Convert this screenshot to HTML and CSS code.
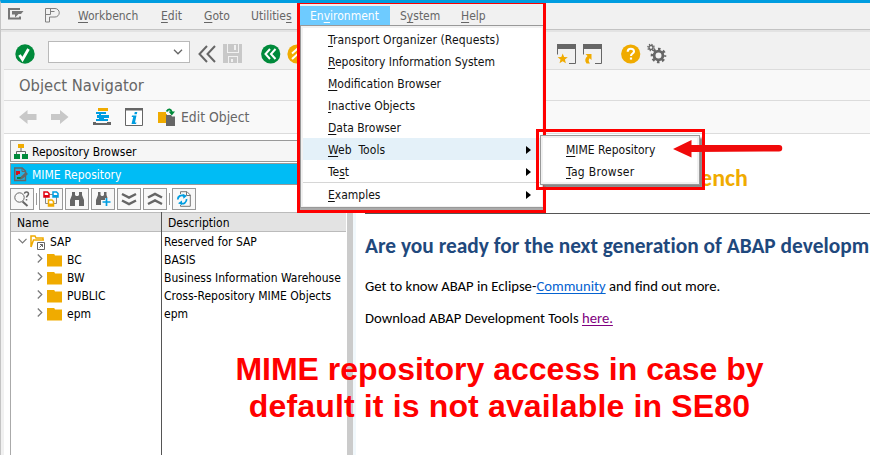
FILE: index.html
```
<!DOCTYPE html>
<html lang="en">
<head>
<meta charset="utf-8">
<title>Object Navigator</title>
<link rel="stylesheet" href="styles.css">
</head>
<body>
<div class="window">
  <nav class="menubar">
    <svg class="sys-icon" width="16" height="12" viewBox="0 0 16 12"><path d="M12 1H1V10.500H12V8.500" fill="none" stroke="#777" stroke-width="2"/><path d="M4 3h11.500l-2.500 3H10.500L7 9.500V6.500H4z" fill="#777"/></svg>
    <svg class="p-icon" width="16" height="15" viewBox="0 0 16 15"><path d="M.5 14V.5H10a4.200 4.200 0 0 1 0 8.500H4.500V14zM5.500 .5V6.500H.5M5.500 3.500H9.500" fill="none" stroke="#808080"/></svg>
    <div class="menus">
      <span><u>W</u>orkbench</span><span><u>E</u>dit</span><span><u>G</u>oto</span><span>Utilitie<u>s</u></span><span class="open">En<u>v</u>ironment</span><span>S<u>y</u>stem</span><span><u>H</u>elp</span>
    </div>
  </nav>
  <div class="toolbar">
    <svg class="t-check" width="20" height="20" viewBox="0 0 20 20"><circle cx="10" cy="10" r="9.700" fill="#008a3b"/><path d="M4.500 11l3 4.500L13.500 5" fill="none" stroke="#fff" stroke-width="2.800"/></svg>
    <div class="combo"><svg width="10" height="6" viewBox="0 0 10 6"><path d="M1 .8l4 4 4-4" fill="none" stroke="#666" stroke-width="1.300"/></svg></div>
    <svg class="t-back" width="18" height="18" viewBox="0 0 18 18"><path d="M9 1L1.500 9 9 17M17 1L9.500 9 17 17" fill="none" stroke="#666" stroke-width="2"/></svg>
    <svg class="t-save" width="20" height="19" viewBox="0 0 20 19"><path d="M0 0h19v19H0z" fill="#c8c8c8"/><path d="M4 0h1v8h10V0h1v9H4zM5 12h10v1H6v6H5zM14 13h1v6h-1z" fill="#f1f1f1"/><path d="M11 1h2v5h-2zM8 15h2v3H8z" fill="#f1f1f1"/></svg>
    <svg class="t-prev" width="20" height="20" viewBox="0 0 20 20"><circle cx="9.700" cy="10" r="9.600" fill="#008a3b"/><path d="M9 5L4.500 10 9 15M14.500 5L10 10l4.500 5" fill="none" stroke="#fff" stroke-width="2"/></svg>
    <svg class="t-up" width="20" height="20" viewBox="0 0 20 20"><circle cx="10" cy="10" r="9.600" fill="#f0ab00"/><path d="M5 9.500L10 5l5 4.500M5 15l5-4.500 5 4.500" fill="none" stroke="#fff" stroke-width="2"/></svg>
    <svg class="t-star" width="19" height="20" viewBox="0 0 19 20"><path d="M0 0h19v5H0z" fill="#666"/><path d="M.5 4v6.500M18.500 4v15.500H12" fill="none" stroke="#666"/><path d="M5.700 9.500l1.400 3.500 3.700.3-2.900 2.300 1 3.700-3.200-2-3.200 2 1-3.700L.6 13.300l3.700-.3z" fill="#f0ab00"/></svg>
    <svg class="t-link" width="19" height="20" viewBox="0 0 19 20"><path d="M0 0h19v5H0z" fill="#666"/><path d="M.5 4v6.500M18.500 4v15.500H12" fill="none" stroke="#666"/><path d="M2.500 10h6v6L6.700 14.300Q4.500 16.500 7 19.500H3.500Q.5 15.500 4.500 12z" fill="#f0ab00"/></svg>
    <svg class="t-help" width="20" height="20" viewBox="0 0 20 20"><circle cx="9.700" cy="10" r="9.600" fill="#f0ab00"/><path d="M6.700 7.800C6.700 3.800 13 4 13 7.400 13 9.500 10 9.500 10 12" fill="none" stroke="#fff" stroke-width="2.100"/><path d="M8.900 13.500h2.200v2.100H8.900z" fill="#fff"/></svg>
    <svg class="t-gear" width="20" height="21" viewBox="0 0 20 21"><g fill="none" stroke="#666"><circle cx="11.500" cy="12.500" r="4.400" stroke-width="2.800"/><circle cx="11.500" cy="12.500" r="6.500" stroke-width="2.600" stroke-dasharray="2.550" stroke-dashoffset="1.275"/><circle cx="4" cy="4.500" r="2" stroke-width="1.400"/><circle cx="4" cy="4.500" r="3.200" stroke-width="1.300" stroke-dasharray="1.257"/></g></svg>
  </div>
  <div class="inner">
    <h1 class="title">Object Navigator</h1>
    <div class="actions">
      <svg class="a-left" width="18" height="14" viewBox="0 0 18 14"><path d="M0 7L8.500 0v4h9v6h-9v4z" fill="#c8c8c8"/></svg>
      <svg class="a-right" width="18" height="14" viewBox="0 0 18 14"><path d="M17.500 7L9 0v4H0v6h9v4z" fill="#c8c8c8"/></svg>
      <svg class="a-stack" width="18" height="18" viewBox="0 0 18 18"><path d="M5 0h10v3H5z" fill="#f0ab00"/><path d="M3 4h10v2H8v1h8v3h-5v1h4v2H3v-2h3v-1H4V7h2V6H3z" fill="#009de0"/><path d="M0 14h3v1h11v-1h4v3H0z" fill="#666"/></svg>
      <svg class="a-info" width="18" height="18" viewBox="0 0 18 18"><path d="M.5 .5h17v17H.5z" fill="#fff" stroke="#666"/><path d="M0 0h18v2.500H0z" fill="#666"/><path d="M9.800 4h2.500l-.5 2.200H9.300zM7 7.500h4.500L10 14.500h1.500L11 16H6.500L8.200 9H6.700z" fill="#009de0"/></svg>
      <svg class="a-edit" width="18" height="18" viewBox="0 0 18 18"><path d="M0 4h8v2h1v9H0z" fill="#f0ab00"/><path d="M8.500 3.500Q12-1 14 4.500" fill="none" stroke="#008a3b" stroke-width="1.800"/><path d="M10.500 3.500H17L13.800 7.500z" fill="#008a3b"/><path d="M8 7h5l1 1.500h3V18H8z" fill="#666"/></svg>
      <span>Edit Object</span>
    </div>
    <div class="workspace">
      <aside class="browser">
        <div class="bar">
          <svg width="14" height="15" viewBox="0 0 14 15"><path d="M4 0h6v4H4z" fill="#f0ab00"/><path d="M7 4v3M2.500 10V7.500h9V10" fill="none" stroke="#666"/><path d="M0 10h6v5H0zM8 10h6v5H8z" fill="#008a3b"/></svg>
          <span>Repository Browser</span>
        </div>
        <div class="bar active">
          <svg width="14" height="15" viewBox="0 0 14 15"><path d="M.7 1h7.500L11.500 4v9.500H.7z" fill="#22b2e3" stroke="#666" stroke-width="1.400"/><path d="M8 1v3.500h3.500" fill="none" stroke="#666"/><path d="M2 4h4v3H4v1H2z" fill="#d8101c"/><path d="M3 10h4v2H3z" fill="#008a3b"/><path d="M6 12.500l1-3 5-4.500 2 2-5 4.500z" fill="#666"/></svg>
          <span>MIME Repository</span>
        </div>
        <div class="tools">
          <span class="btn"><svg width="16" height="16" viewBox="0 0 16 16"><circle cx="5.500" cy="6.500" r="4.700" fill="none" stroke="#666"/><path d="M8.500 10.500l5 4.500" stroke="#666" stroke-width="2"/><path d="M10.500 2.800C10.500 .2 14.500 .3 14.500 3c0 1.500-2 1.700-2 3.500M12.500 8v1.500" fill="none" stroke="#666" stroke-width="1.500"/></svg></span>
          <i class="sep"></i>
          <span class="btn"><svg width="16" height="16" viewBox="0 0 16 16"><path d="M2.500 6v6.500H5M13.500 6v6.500H11M6 3.500h4" fill="none" stroke="#888"/><path d="M1 1h3.500L6 2.500V6H1z" fill="#fff" stroke="#e0000f" stroke-width="1.500"/><path d="M10 1h3.500L15 2.500V6h-5z" fill="#fff" stroke="#009de0" stroke-width="1.500"/><path d="M5.500 9H9l1.500 1.500V15h-5z" fill="#fff" stroke="#f0ab00" stroke-width="1.500"/><path d="M1 4h5v2H1z" fill="#e0000f"/><path d="M10 4h5v2h-5z" fill="#009de0"/><path d="M5.500 12.500h5V15h-5z" fill="#f0ab00"/></svg></span>
          <span class="btn"><svg width="16" height="16" viewBox="0 0 16 16"><path d="M3 1h3v3l1 1h2l1-1V1h3v3l2 5v6h-5V9H6v6H1V9l2-5z" fill="#666"/></svg></span>
          <span class="btn"><svg width="16" height="16" viewBox="0 0 16 16"><path d="M3 1h2.500v3l1 1H8l1-1V1h2.500v3l1 3H10v2H6v5H1V9l2-5z" fill="#666"/><path d="M11.500 7v8M7.500 11h8" stroke="#009de0" stroke-width="1.700"/></svg></span>
          <span class="btn"><svg width="16" height="16" viewBox="0 0 16 16"><path d="M1 3l7 3.500L15 3M1 9.500L8 13l7-3.500" fill="none" stroke="#666" stroke-width="2.500"/></svg></span>
          <span class="btn"><svg width="16" height="16" viewBox="0 0 16 16"><path d="M1 6.500L8 3l7 3.500M1 13l7-3.500 7 3.500" fill="none" stroke="#666" stroke-width="2.500"/></svg></span>
          <i class="sep"></i>
          <span class="btn"><svg width="16" height="16" viewBox="0 0 16 16"><path d="M4.500 3V.7H11L14.300 4v11.300H4.500V14M10.500 1v3.500h4" fill="none" stroke="#777"/><path d="M1.800 8.500A4 4 0 0 1 8 5M10.500 8a4 4 0 0 1-6 4" fill="none" stroke="#009de0" stroke-width="1.800"/><path d="M6.500 2.700l4.500 2-3.500 3zM6 9.500V14l-4-1.800z" fill="#009de0"/></svg></span>
        </div>
        <div class="tree">
          <div class="names">
            <div class="th">Name</div>
            <div class="row root">
              <svg class="chev" width="9" height="6" viewBox="0 0 9 6"><path d="M.5 .8l4 4 4-4" fill="none" stroke="#777" stroke-width="1.200"/></svg>
              <svg width="15" height="15" viewBox="0 0 15 15"><path d="M1 12V1h4l1 2h7v2M1 12L3.500 5H14" fill="none" stroke="#f0ab00" stroke-width="1.500"/><path d="M7.500 7.500h7v7h-7z" fill="#fff" stroke="#666"/><path d="M9.500 12.500l3-3M10 9.500h2.500V12" fill="none" stroke="#666"/></svg>
              <span>SAP</span>
            </div>
            <div class="row"><svg class="chev" width="6" height="9" viewBox="0 0 6 9"><path d="M.8 .5l4 4-4 4" fill="none" stroke="#777" stroke-width="1.200"/></svg><i class="folder"></i><span>BC</span></div>
            <div class="row"><svg class="chev" width="6" height="9" viewBox="0 0 6 9"><path d="M.8 .5l4 4-4 4" fill="none" stroke="#777" stroke-width="1.200"/></svg><i class="folder"></i><span>BW</span></div>
            <div class="row"><svg class="chev" width="6" height="9" viewBox="0 0 6 9"><path d="M.8 .5l4 4-4 4" fill="none" stroke="#777" stroke-width="1.200"/></svg><i class="folder"></i><span>PUBLIC</span></div>
            <div class="row"><svg class="chev" width="6" height="9" viewBox="0 0 6 9"><path d="M.8 .5l4 4-4 4" fill="none" stroke="#777" stroke-width="1.200"/></svg><i class="folder"></i><span>epm</span></div>
          </div>
          <div class="descs">
            <div class="th">Description</div>
            <div class="row">Reserved for SAP</div>
            <div class="row">BASIS</div>
            <div class="row">Business Information Warehouse</div>
            <div class="row">Cross-Repository MIME Objects</div>
            <div class="row">epm</div>
          </div>
        </div>
      </aside>
      <div class="splitter"></div>
      <main class="page">
        <h2>Welcome to the ABAP Workbench</h2>
        <h3>Are you ready for the next generation of ABAP developm</h3>
        <p>Get to know ABAP in Eclipse-<a class="link">Community</a> and find out more.</p>
        <p>Download ABAP Development Tools <a class="visited">here.</a></p>
      </main>
    </div>
  </div>

  <div class="dropdown">
    <div class="item"><span><u>T</u>ransport Organizer (Requests)</span></div>
    <div class="item"><span><u>R</u>epository Information System</span></div>
    <div class="item"><span><u>M</u>odification Browser</span></div>
    <div class="item"><span><u>I</u>nactive Objects</span></div>
    <div class="item"><span><u>D</u>ata Browser</span></div>
    <div class="item hover wide"><span><u>W</u>eb Tools</span><b></b></div>
    <div class="item"><span>Te<u>s</u>t</span><b></b></div>
    <hr>
    <div class="item"><span><u>E</u>xamples</span><b></b></div>
  </div>
  <div class="mark mark-menu"></div>
  <div class="submenu">
    <div class="item"><span><u>M</u>IME Repository</span></div>
    <div class="item tag"><span><u>T</u>ag Browser</span></div>
  </div>
  <div class="mark mark-sub"></div>
  <svg class="arrow" width="110" height="20" viewBox="0 0 110 20"><path d="M0 10L18.500 1v5H106a3 3 0 0 1 0 6.500L18.500 13v5.500z" fill="#f00a0a"/></svg>
  <div class="note">MIME repository access in case by<br><span>default it is not available in SE80</span></div>
</div>
</body>
</html>
```
FILE: styles.css
```
* { box-sizing: border-box; }
body { margin: 0; overflow: hidden; }
svg { display: block; flex: none; }
u { text-decoration: underline; text-underline-offset: 2px; text-decoration-thickness: 1px; text-decoration-skip-ink: none; }

.window {
  position: relative;
  display: flex;
  flex-direction: column;
  width: 870px;
  height: 455px;
  overflow: hidden;
  background: #f1f1f1;
  border-top: 3px solid #009de0;
  border-left: 1px solid #c4c4c4;
  font: 12px/18px "DejaVu Sans Condensed", "DejaVu Sans", sans-serif;
  color: #000;
}

.menubar {
  display: flex;
  height: 27px;
  flex: none;
  padding-left: 7px;
  border-bottom: 1px solid #c3c3c3;
  color: #666;
}
.sys-icon { margin-top: 5px; }
.p-icon { margin: 5px 0 0 21px; }
.menus {
  display: grid;
  grid-template-columns: 83px 43px 47px 59px 90px 61px 50px;
  margin: 3px 0 0 7px;
  line-height: 20px;
}
.menus span { height: 19px; padding-left: 10px; }
.menus .open { background: #6ecbff; color: #fff; }

.toolbar {
  display: flex;
  align-items: center;
  height: 40px;
  flex: none;
  padding-top: 5px;
  border-top: 2px solid #e3e3e3;
}
.t-check { margin-left: 14px; }
.combo {
  display: flex;
  align-items: center;
  justify-content: flex-end;
  width: 142px;
  height: 22px;
  margin: -3px 0 0 13px;
  padding-right: 6px;
  background: #fff;
  border: 1px solid #b9b9b9;
}
.t-back { margin-left: 8px; }
.t-save { margin-left: 7px; }
.t-prev { margin-left: 18px; }
.t-up { margin-left: 6px; }
.t-star { margin-left: 250px; }
.t-link { margin-left: 7px; }
.t-help { margin-left: 19px; }
.t-gear { margin-left: 6px; }

.inner {
  display: flex;
  flex-direction: column;
  flex: 1;
  margin-left: 3px;
  min-height: 0;
}
.title {
  flex: none;
  height: 32px;
  margin: -1px 0 0;
  padding-left: 15px;
  background: #f9f9f9;
  border-top: 1px solid #dcdcdc;
  border-bottom: 1px solid #dcdcdc;
  font-size: 16.400px;
  line-height: 31px;
  font-weight: normal;
  color: #666;
}
.actions {
  display: flex;
  align-items: center;
  flex: none;
  height: 33px;
  padding: 0 0 0 15px;
  background: #f9f9f9;
  border-bottom: 1px solid #dcdcdc;
  color: #666;
  font-size: 13.800px;
}
.a-right { margin-left: 14px; }
.a-stack { margin-left: 24px; }
.a-info { margin-left: 14px; }
.a-edit { margin-left: 15px; }
.actions span { margin-left: 5px; }

.workspace { display: flex; flex: 1; min-height: 0; background: #fff; }
.browser {
  display: flex;
  flex-direction: column;
  flex: none;
  width: 343px;
  padding: 6px 0 0 6px;
}
.bar {
  display: flex;
  align-items: center;
  gap: 4px;
  height: 22px;
  margin-bottom: 1px;
  padding-left: 3px;
  flex: none;
  background: #f6f6f6;
  border: 1px solid #999;
  border-right: 0;
}
.bar span { padding-top: 1px; }
.bar.active { background: #00bcf5; color: #fff; }
.tools { display: flex; gap: 2px; height: 22px; margin-top: 2px; flex: none; }
.btn {
  display: flex;
  align-items: center;
  justify-content: center;
  width: 24px;
  height: 22px;
  background: #f8f8f8;
  border: 1px solid #999;
}
.sep { width: 1px; height: 12px; margin-top: 5px; background: #999; }

.tree {
  display: flex;
  flex: 1;
  margin-top: 2px;
  border-left: 1px solid #aaa;
}
.names { width: 151px; border-right: 1px solid #555; }
.descs { flex: 1; padding-right: 1px; white-space: nowrap; }
.th {
  height: 20px;
  margin-bottom: 1px;
  padding-left: 6px;
  background: #e3e3e3;
  border-top: 1px solid #bbb;
  border-bottom: 1px solid #bbb;
  line-height: 20px;
}
.row { display: flex; align-items: center; height: 18px; }
.names .row { padding-left: 26px; }
.names .root { padding-left: 7px; }
.names .row span { margin-left: 5px; }
.root .chev { margin: -2px 3px 0 0; }
.row:not(.root) .chev { margin: -4px 4px 0 0; }
.descs .row { padding-left: 2px; }
.folder {
  width: 15px;
  height: 13px;
  background: #f0ab00;
  clip-path: polygon(0 0, 7px 0, 8px 2px, 100% 2px, 100% 100%, 0 100%);
}

.splitter { width: 6px; flex: none; background: #cbcbcb; }
.page {
  flex: 1;
  min-width: 0;
  padding: 32px 0 0 9px;
  border-left: 3px solid #f1f8fc;
  font: 14.667px/18px Carlito, Lato, sans-serif;
  font-variant-ligatures: none;
  white-space: nowrap;
}
.page h2 {
  margin: 0;
  height: 48px;
  padding-right: 122px;
  border-bottom: 1px solid #555;
  font-size: 24px;
  line-height: 24px;
  text-align: right;
  color: #f0ab00;
}
.page h3 { margin: 20px 0 19px; font-size: 21.400px; line-height: 24px; color: #1f497d; }
.page p { margin: 0 0 14px; }
.link, .visited { text-decoration: underline; text-underline-offset: 2px; text-decoration-skip-ink: none; }
.link { color: #0563d1; }
.visited { color: #800080; }

.dropdown {
  position: absolute;
  left: 299px;
  top: 22px;
  width: 244px;
  height: 183px;
  padding: 2px 2px 0;
  background: #fff;
  border: 1px solid #999;
  border-right: 0;
  box-shadow: inset 2px 2px #f1f1f1, inset -2px -1px #f1f1f1, 0 2px 1px #aaa;
}
.item {
  display: flex;
  align-items: center;
  justify-content: space-between;
  height: 22px;
  padding: 2px 11px 0 25px;
  color: #111;
}
.item b { border: 4px solid transparent; border-left: 5px solid #000; border-right: 0; }
.item:first-child, .wide { letter-spacing: .12px; }
.wide { word-spacing: 3px; }
.hover { background: #e4f1f9; }
.dropdown hr { height: 1px; margin: 0; border: 0; background: #d6d6d6; }
.submenu {
  position: absolute;
  left: 539px;
  top: 132px;
  width: 160px;
  height: 50px;
  padding: 2px 0;
  background: #fff;
  border: 1px solid #999;
  box-shadow: inset 0 0 0 2px #f1f1f1, 3px 3px 2px #888;
}
.submenu .item { letter-spacing: 0; }
.submenu .tag { letter-spacing: .3px; }
.mark { position: absolute; border: 3px solid #f00; }
.mark-menu { left: 296px; top: -2px; width: 249px; height: 212px; }
.mark-sub { left: 535px; top: 126px; width: 169px; height: 61px; }
.arrow { position: absolute; left: 672px; top: 136px; }
.note {
  position: absolute;
  left: 234px;
  top: 348px;
  width: 529px;
  font: bold 32px/36.500px "Liberation Sans", sans-serif;
  text-align: center;
  white-space: nowrap;
  color: #f00;
}
.note span { letter-spacing: .15px; }
```
